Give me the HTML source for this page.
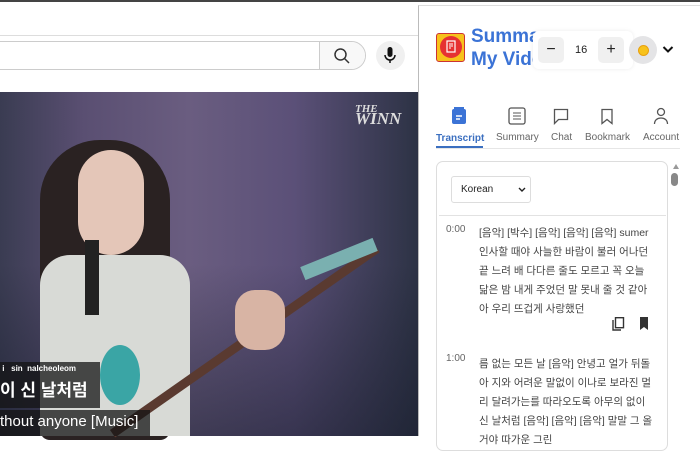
<!DOCTYPE html>
<html><head><meta charset="utf-8"><style>
*{margin:0;padding:0;box-sizing:border-box}
body{width:700px;height:436px;overflow:hidden;position:relative;background:#fff;font-family:"Liberation Sans","Noto Sans CJK KR",sans-serif}
.abs{position:absolute}
</style></head><body>
<div class="abs" style="left:0;top:0;width:700px;height:2px;background:#444"></div>
<div class="abs" style="left:0;top:35px;width:420px;height:1px;background:#ddd"></div>
<div class="abs" style="left:-20px;top:41px;width:386px;height:29px;border:1px solid #ccc;border-radius:0 15px 15px 0;background:#fff"></div>
<div class="abs" style="left:319px;top:42px;width:46px;height:27px;background:#f8f8f8;border-left:1px solid #ccc;border-radius:0 14px 14px 0"></div>
<svg class="abs" style="left:333px;top:47px" width="18" height="18" viewBox="0 0 18 18"><circle cx="7.5" cy="7.5" r="5.5" fill="none" stroke="#333" stroke-width="1.5"/><path d="M11.5 11.5L16 16" stroke="#333" stroke-width="1.5"/></svg>
<div class="abs" style="left:376px;top:41px;width:29px;height:29px;border-radius:50%;background:#f0f0f0"></div>
<svg class="abs" style="left:383px;top:47px" width="14" height="17" viewBox="0 0 14 17"><rect x="4.5" y="0" width="5" height="10" rx="2.5" fill="#111"/><path d="M2 8a5 5 0 0 0 10 0M7 13v3" stroke="#111" stroke-width="1.5" fill="none"/></svg>
<!-- video -->
<div class="abs" style="left:0;top:92px;width:420px;height:344px;background:linear-gradient(90deg,#3a3c52 0%,#5a4f72 20%,#6a5d80 45%,#5b5078 70%,#2c3244 100%)"></div>
<div class="abs" style="left:0;top:92px;width:420px;height:344px;background:linear-gradient(180deg,rgba(0,0,0,0) 50%,rgba(20,25,40,.5) 100%)"></div>
<div class="abs" style="left:40px;top:140px;width:130px;height:300px;border-radius:60px 60px 10px 10px;background:#2a2222"></div>
<div class="abs" style="left:78px;top:150px;width:66px;height:105px;border-radius:33px;background:#e4c6b8"></div>
<div class="abs" style="left:40px;top:255px;width:150px;height:181px;border-radius:30px 30px 0 0;background:#d8dad6"></div>
<div class="abs" style="left:85px;top:240px;width:14px;height:75px;background:#222"></div>
<div class="abs" style="left:100px;top:345px;width:40px;height:60px;border-radius:50%;background:#3aa5a5"></div>
<div class="abs" style="left:110px;top:430px;width:323px;height:9px;background:#5a3a30;transform:rotate(-35deg);transform-origin:0 0"></div>
<div class="abs" style="left:300px;top:252px;width:78px;height:14px;background:#7ab0b0;transform:rotate(-22deg)"></div>
<div class="abs" style="left:235px;top:290px;width:50px;height:60px;border-radius:20px;background:#d8b4a4"></div>
<div class="abs" style="left:355px;top:104px;color:#ddd;font:italic bold 11px 'Liberation Serif',serif;line-height:10px">THE<br><span style="font-size:17px">WINN</span></div>
<div class="abs" style="left:0;top:362px;width:100px;height:46px;background:rgba(20,20,20,.75)"></div>
<div class="abs" style="left:0;top:364px;color:#fff;font-size:8px;font-weight:bold">&nbsp;i &nbsp; sin &nbsp;nalcheoleom</div>
<div class="abs" style="left:0;top:376px;color:#fff;font-size:17px;font-weight:bold">이 신 날처럼</div>
<div class="abs" style="left:0;top:410px;width:150px;height:26px;background:rgba(20,20,20,.75)"></div>
<div class="abs" style="left:0;top:413px;color:#fff;font-size:15px">thout anyone [Music]</div>
<!-- panel -->
<div class="abs" style="left:418px;top:5px;width:282px;height:431px;background:#fff;border-left:1px solid #bbb;border-top:1px solid #ddd"></div>
<div class="abs" style="left:436px;top:33px;width:29px;height:29px;background:#f7c21b;border:1px solid #c33;border-radius:3px"></div>
<div class="abs" style="left:440px;top:36px;width:22px;height:22px;background:#e63232;border-radius:50%"></div>
<svg class="abs" style="left:444px;top:40px" width="14" height="14" viewBox="0 0 14 14"><rect x="3" y="1" width="8" height="11" fill="none" stroke="#fff" stroke-width="1.2"/><path d="M5 4h4M5 6h4M5 8h2" stroke="#fff"/></svg>
<div class="abs" style="left:471px;top:25px;color:#3b73d6;font-size:19px;font-weight:bold;line-height:23px">Summa<br>My Vide</div>
<div class="abs" style="left:533px;top:31px;width:100px;height:38px;background:#fff;border-radius:6px;box-shadow:0 0 4px rgba(0,0,0,.08)"></div>
<div class="abs" style="left:538px;top:37px;width:26px;height:26px;background:#f0f0f0;border-radius:5px;text-align:center;line-height:25px;font-size:16px;color:#222">−</div>
<div class="abs" style="left:575px;top:44px;font-size:11px;color:#222">16</div>
<div class="abs" style="left:598px;top:37px;width:26px;height:26px;background:#f0f0f0;border-radius:5px;text-align:center;line-height:25px;font-size:16px;color:#222">+</div>
<div class="abs" style="left:629px;top:36px;width:28px;height:28px;background:#e4e4e6;border-radius:50%"></div>
<div class="abs" style="left:638px;top:45px;width:11px;height:11px;background:#f7c21b;border:1px solid #e8a010;border-radius:50%"></div>
<svg class="abs" style="left:662px;top:45px" width="12" height="9" viewBox="0 0 12 9"><path d="M1.5 2l4.5 4.5L10.5 2" stroke="#111" stroke-width="2" fill="none"/></svg>
<!-- tabs -->
<svg class="abs" style="left:451px;top:106px" width="16" height="19" viewBox="0 0 16 19"><path d="M3 1h10v2H3z" fill="#3b73d6"/><rect x="1" y="3" width="14" height="15" rx="2" fill="#3b73d6"/><path d="M5 10h6M5 13h4" stroke="#fff" stroke-width="1.5"/></svg>
<svg class="abs" style="left:508px;top:107px" width="18" height="18" viewBox="0 0 18 18"><rect x="1" y="1" width="16" height="16" rx="2" fill="none" stroke="#555" stroke-width="1.3"/><path d="M5 6h8M5 9h8M5 12h8" stroke="#555"/></svg>
<svg class="abs" style="left:553px;top:108px" width="16" height="17" viewBox="0 0 16 17"><path d="M1.5 1.5h13v10h-9l-4 4z" fill="none" stroke="#555" stroke-width="1.3"/></svg>
<svg class="abs" style="left:600px;top:108px" width="14" height="17" viewBox="0 0 14 17"><path d="M2 1.5h10v14l-5-4-5 4z" fill="none" stroke="#555" stroke-width="1.3"/></svg>
<svg class="abs" style="left:653px;top:107px" width="16" height="18" viewBox="0 0 16 18"><circle cx="8" cy="5" r="3.5" fill="none" stroke="#555" stroke-width="1.3"/><path d="M1.5 17c0-4 3-6 6.5-6s6.5 2 6.5 6" fill="none" stroke="#555" stroke-width="1.3"/></svg>
<div class="abs" style="left:436px;top:133px;font-size:10px;font-weight:bold;color:#3b6fc0">Transcript</div>
<div class="abs" style="left:496px;top:132px;font-size:10px;color:#666">Summary</div>
<div class="abs" style="left:551px;top:132px;font-size:10px;color:#666">Chat</div>
<div class="abs" style="left:585px;top:132px;font-size:10px;color:#666">Bookmark</div>
<div class="abs" style="left:643px;top:132px;font-size:10px;color:#666">Account</div>
<div class="abs" style="left:436px;top:148px;width:244px;height:1px;background:#e6e6e6"></div>
<div class="abs" style="left:436px;top:146px;width:47px;height:2px;background:#3b6fc0"></div>
<!-- content -->
<div class="abs" style="left:436px;top:161px;width:232px;height:290px;border:1px solid #ddd;border-radius:7px"></div>
<div class="abs" style="left:673px;top:164px;width:0;height:0;border-left:3px solid transparent;border-right:3px solid transparent;border-bottom:5px solid #999"></div>
<div class="abs" style="left:671px;top:173px;width:7px;height:13px;background:#888;border-radius:4px"></div>
<div class="abs" style="left:451px;top:176px;width:80px;height:27px;border:1px solid #ddd;border-radius:3px"></div>
<div class="abs" style="left:461px;top:184px;font-size:10px;color:#222">Korean</div>
<svg class="abs" style="left:518px;top:187px" width="8" height="6" viewBox="0 0 8 6"><path d="M1 1l3 3 3-3" stroke="#222" stroke-width="1.4" fill="none"/></svg>
<div class="abs" style="left:439px;top:215px;width:227px;height:1px;background:#e2e2e2"></div>
<div class="abs" style="left:446px;top:224px;font-size:10px;color:#666">0:00</div>
<div class="abs" style="left:479px;top:224px;width:174px;font-size:10.5px;line-height:19px;color:#444">[음악] [박수] [음악] [음악] [음악] sumer 인사할 때야 사늘한 바람이 불러 어나던 끝 느려 배 다다른 줄도 모르고 꼭 오늘 닮은 밤 내게 주었던 말 못내 줄 것 같아아 우리 뜨겁게 사랑했던</div>
<svg class="abs" style="left:612px;top:317px" width="13" height="14" viewBox="0 0 13 14"><path d="M1 3v10h8" fill="none" stroke="#333" stroke-width="1.4"/><rect x="3.5" y="0.7" width="8" height="10" fill="none" stroke="#333" stroke-width="1.4"/></svg>
<svg class="abs" style="left:639px;top:317px" width="10" height="13" viewBox="0 0 10 13"><path d="M1 0h8v13l-4-3-4 3z" fill="#333"/></svg>
<div class="abs" style="left:446px;top:353px;font-size:10px;color:#666">1:00</div>
<div class="abs" style="left:479px;top:355px;width:174px;font-size:10.5px;line-height:19px;color:#444">름 없는 모든 날 [음악] 안녕고 얼가 뒤돌아 지와 어려운 말없이 이나로 보라진 멀리 달려가는를 따라오도록 아무의 없이 신 날처럼 [음악] [음악] [음악] 말말 그 올거야 따가운 그린</div>
</body></html>
